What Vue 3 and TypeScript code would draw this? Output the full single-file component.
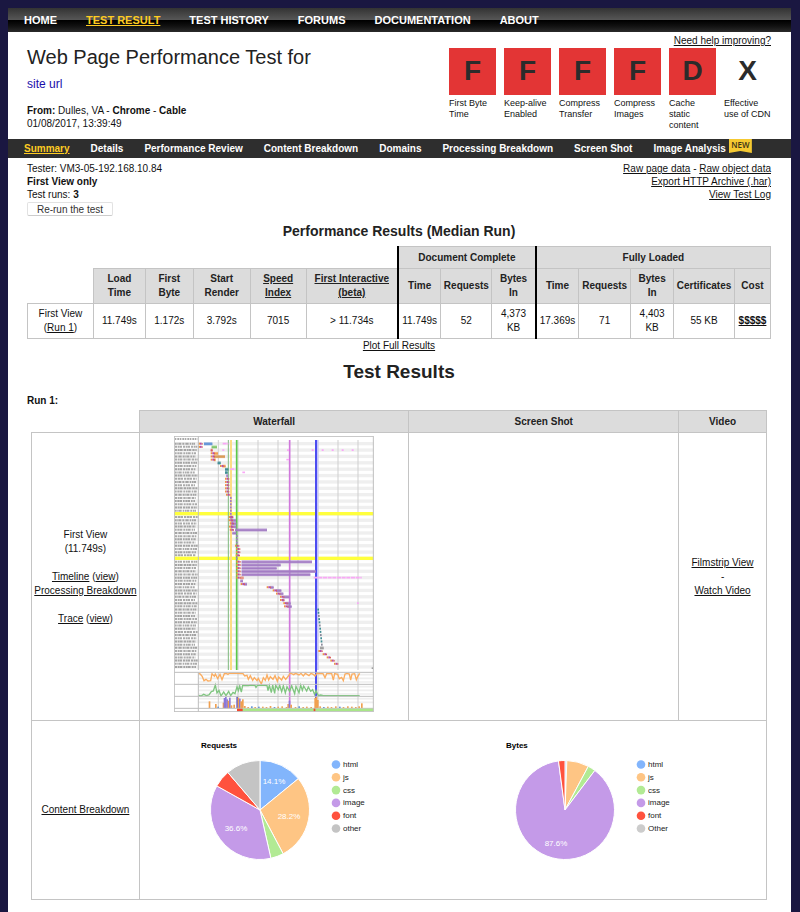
<script setup lang="ts">
interface Grade { letter: string; label: string; failing: boolean }
interface Slice { label: string; value: number; color: string }
interface Bar { row: number; x1: number; x2: number; color: string }

const mainNav: string[] = ['HOME', 'TEST RESULT', 'TEST HISTORY', 'FORUMS', 'DOCUMENTATION', 'ABOUT']
const subNav: string[] = [
  'Summary', 'Details', 'Performance Review', 'Content Breakdown', 'Domains',
  'Processing Breakdown', 'Screen Shot', 'Image Analysis',
]
const grades: Grade[] = [
  { letter: 'F', label: 'First Byte Time', failing: true },
  { letter: 'F', label: 'Keep-alive Enabled', failing: true },
  { letter: 'F', label: 'Compress Transfer', failing: true },
  { letter: 'F', label: 'Compress Images', failing: true },
  { letter: 'D', label: 'Cache static content', failing: true },
  { letter: 'X', label: 'Effective use of CDN', failing: false },
]

const share = (parts: number[]): string[] => {
  const total = parts.reduce((a, b) => a + b, 0)
  return parts.map((p) => `${(p / total) * 100}%`)
}
const summaryCols = share([66, 52, 48, 57, 56, 92, 43, 51, 44, 43, 52, 43, 61, 36])
const resultCols = share([108, 270, 270, 88])

// Waterfall: 71 request rows
const rowY = (row: number): number => 41 + 9.57 * row
const rows = Array.from({ length: 71 }, (_, i) => i)
const gridX = [160, 219, 279, 339, 399, 459, 519, 579]
const P = '#a37cc4'
const O = '#f0a050'
const R = '#d9605a'
const G = '#7fc46a'
const B = '#5b8fd6'
const T = '#3f8c94'
const bars: Bar[] = [
  { row: 0, x1: 117, x2: 142, color: B }, { row: 1, x1: 140, x2: 156, color: G },
  { row: 2, x1: 137, x2: 143, color: R }, { row: 3, x1: 146, x2: 159, color: O },
  { row: 4, x1: 146, x2: 180, color: '#d99a55' }, { row: 5, x1: 146, x2: 152, color: O },
  { row: 6, x1: 158, x2: 167, color: T }, { row: 7, x1: 172, x2: 182, color: O },
  { row: 8, x1: 180, x2: 190, color: T }, { row: 9, x1: 180, x2: 188, color: T },
  { row: 10, x1: 184, x2: 189, color: P },
  { row: 23, x1: 194, x2: 205, color: P }, { row: 24, x1: 199, x2: 213, color: P },
  { row: 25, x1: 200, x2: 214, color: P }, { row: 26, x1: 198, x2: 214, color: P },
  { row: 27, x1: 210, x2: 306, color: P }, { row: 28, x1: 202, x2: 214, color: P },
  { row: 37, x1: 230, x2: 441, color: P }, { row: 38, x1: 230, x2: 347, color: P },
  { row: 39, x1: 230, x2: 335, color: P }, { row: 40, x1: 230, x2: 453, color: P },
  { row: 41, x1: 230, x2: 436, color: P }, { row: 42, x1: 226, x2: 236, color: '#e5907e' },
  { row: 43, x1: 226, x2: 234, color: P }, { row: 44, x1: 236, x2: 246, color: P },
  { row: 45, x1: 315, x2: 326, color: P }, { row: 46, x1: 333, x2: 349, color: P },
  { row: 47, x1: 343, x2: 355, color: P }, { row: 48, x1: 355, x2: 373, color: P },
  { row: 49, x1: 352, x2: 358, color: P }, { row: 50, x1: 364, x2: 377, color: P },
  { row: 51, x1: 367, x2: 380, color: P }, { row: 64, x1: 465, x2: 476, color: '#999' },
]
// Rows that open with a connect + TLS segment
const connects: [number, number][] = [
  [0, 100], [1, 100], [3, 137], [4, 137], [5, 137], [7, 165], [11, 180], [12, 180], [13, 180],
  [14, 180], [15, 180], [16, 183], [23, 191], [24, 191], [25, 194], [26, 192], [27, 194], [32, 210],
  [33, 213], [34, 213], [35, 212], [37, 214], [38, 214], [39, 214], [40, 214], [41, 214], [42, 214],
  [44, 227], [45, 305], [46, 323], [47, 333], [48, 345], [49, 345], [50, 355], [51, 357],
  [65, 460], [66, 473], [67, 485], [68, 496], [69, 507],
]
const ticks: [number, number, string][] = [
  ...[17, 18, 19, 20, 21, 22].map((r): [number, number, string] => [r, 195, P]),
  ...[29, 30, 31, 36].map((r): [number, number, string] => [r, 213, P]),
  ...[52, 53, 54, 55, 56, 57, 58, 59, 60, 61, 62, 63].map(
    (r): [number, number, string] => [r, 457 + (r - 52), r % 3 ? T : '#8a8a9a'],
  ),
]
const scripts: [number, number, number][] = [
  [0, 173, 190], [2, 172, 192], [2, 366, 374], [2, 440, 580], [5, 364, 372], [8, 196, 212],
  [9, 232, 240], [42, 446, 590], [50, 576, 581],
]
const cpu =
  '100,730 106,732 112,740 117,752 123,748 129,753 137,752 141,731 148,739 151,732 158,746 165,733 171,749 178,731 184,730 189,733 193,730 214,730 234,731 239,738 246,736 250,748 256,737 263,751 268,743 276,752 280,745 289,762 295,743 301,751 306,735 311,750 316,740 324,748 330,737 337,754 341,741 350,750 355,739 362,748 370,738 376,729 386,734 392,730 402,735 408,730 415,738 421,730 432,737 438,730 446,734 450,738 456,730 474,731 480,743 485,731 500,731 505,750 509,731 518,733 523,746 530,742 535,752 540,732 546,730 553,732 557,750 561,732 569,731 574,749 578,740 584,730'
const bandwidth =
  '100,796 108,798 116,793 124,797 132,795 139,785 145,783 151,765 156,789 162,781 168,798 176,786 183,797 191,784 197,797 204,787 210,791 216,770 220,782 224,768 229,786 233,766 250,767 258,765 270,766 273,772 277,766 300,766 306,767 309,782 313,766 319,788 323,765 329,790 332,766 340,779 344,766 350,785 355,767 361,789 366,770 374,784 380,767 389,791 393,769 402,788 407,765 412,781 416,768 425,783 430,771 437,784 443,779 449,794 453,782 460,797 467,795 475,797 584,797'
const mainThread: [number, number, string][] = [
  [131, 20, O], [150, 12, O], [157, 4, B], [173, 16, O], [176, 30, '#8a78d8'], [180, 33, '#8a78d8'],
  [184, 26, '#8a78d8'], [188, 22, O], [192, 31, '#8a78d8'], [197, 8, O], [205, 10, O], [214, 34, '#6a62c8'],
  [218, 31, O], [222, 28, '#8a78d8'], [226, 20, O], [231, 26, O], [237, 6, O], [247, 3, O], [258, 5, B],
  [268, 3, O], [279, 4, B], [291, 4, O], [302, 3, O], [314, 6, O], [326, 3, B], [337, 4, O], [349, 5, O],
  [362, 3, O], [367, 12, O], [371, 22, '#8a78d8'], [376, 10, O], [389, 3, O], [400, 5, B], [412, 3, O],
  [423, 4, O], [436, 3, O], [448, 30, O], [452, 34, O], [456, 24, O], [463, 5, O], [474, 3, B], [486, 4, O],
  [497, 3, O], [510, 5, O], [522, 4, B], [533, 3, O], [546, 5, O], [558, 4, O], [570, 3, O], [580, 5, O], [588, 14, O],
]

// Pie charts
const pies: { title: string; slices: Slice[]; captions: [number, number, string][] }[] = [
  {
    title: 'Requests',
    slices: [
      { label: 'html', value: 10, color: '#82b5fc' },
      { label: 'js', value: 20, color: '#fec584' },
      { label: 'css', value: 3, color: '#b2ea94' },
      { label: 'image', value: 26, color: '#c49ae8' },
      { label: 'font', value: 4, color: '#ff523e' },
      { label: 'other', value: 8, color: '#c4c4c4' },
    ],
    captions: [[126, 62, '14.1%'], [141, 97, '28.2%'], [88, 109, '36.6%']],
  },
  {
    title: 'Bytes',
    slices: [
      { label: 'html', value: 0.6, color: '#82b5fc' },
      { label: 'js', value: 7.2, color: '#fec584' },
      { label: 'css', value: 2.5, color: '#b2ea94' },
      { label: 'image', value: 87.6, color: '#c49ae8' },
      { label: 'font', value: 2.1, color: '#ff523e' },
      { label: 'Other', value: 0, color: '#cccccc' },
    ],
    captions: [[103, 124, '87.6%']],
  },
]
const CX = 112
const CY = 88
const RADIUS = 49.5
const wedges = (slices: Slice[]): { d: string; color: string }[] => {
  const total = slices.reduce((a, s) => a + s.value, 0)
  let acc = 0
  return slices.filter((s) => s.value > 0).map((s) => {
    const a0 = (acc / total) * 2 * Math.PI
    acc += s.value
    const a1 = (acc / total) * 2 * Math.PI
    const pt = (a: number): string =>
      `${(CX + RADIUS * Math.sin(a)).toFixed(2)},${(CY - RADIUS * Math.cos(a)).toFixed(2)}`
    return { d: `M${CX},${CY}L${pt(a0)}A${RADIUS},${RADIUS} 0 ${a1 - a0 > Math.PI ? 1 : 0} 1 ${pt(a1)}Z`, color: s.color }
  })
}
</script>

<template>
  <div class="page">
    <nav class="main-nav" aria-label="Main">
      <a v-for="item in mainNav" :key="item" href="#" :class="{ active: item === 'TEST RESULT' }">{{ item }}</a>
    </nav>

    <header class="test-header">
      <div class="test-info">
        <h1>Web Page Performance Test for</h1>
        <a class="site" href="#">site url</a>
        <p><b>From:</b> Dulles, VA - <b>Chrome</b> - <b>Cable</b><br />01/08/2017, 13:39:49</p>
      </div>
      <div class="optimization">
        <a class="help" href="#">Need help improving?</a>
        <ul class="grades">
          <li v-for="grade in grades" :key="grade.label">
            <span class="grade" :class="{ failing: grade.failing }">{{ grade.letter }}</span>
            <span class="grade-label">{{ grade.label }}</span>
          </li>
        </ul>
      </div>
    </header>

    <nav class="sub-nav" aria-label="Test result">
      <a v-for="item in subNav" :key="item" href="#" :class="{ active: item === 'Summary' }">{{ item }}</a>
      <span class="new-badge">NEW</span>
    </nav>

    <main class="content">
      <section class="run-info">
        <div>
          Tester: VM3-05-192.168.10.84<br />
          <b>First View only</b><br />
          Test runs: <b>3</b>
          <button type="button" class="rerun">Re-run the test</button>
        </div>
        <div class="exports">
          <a href="#">Raw page data</a> - <a href="#">Raw object data</a><br />
          <a href="#">Export HTTP Archive (.har)</a><br />
          <a href="#">View Test Log</a>
        </div>
      </section>

      <h2 class="median-title">Performance Results (Median Run)</h2>
      <table class="grid">
        <colgroup><col v-for="(w, i) in summaryCols" :key="i" :style="{ width: w }" /></colgroup>
        <thead>
          <tr class="group-row">
            <td class="blank" colspan="6"></td>
            <th class="divider" colspan="3">Document Complete</th>
            <th class="divider" colspan="5">Fully Loaded</th>
          </tr>
          <tr>
            <td class="blank"></td>
            <th>Load<br />Time</th>
            <th>First<br />Byte</th>
            <th>Start<br />Render</th>
            <th><a href="#">Speed<br />Index</a></th>
            <th><a href="#">First Interactive<br />(beta)</a></th>
            <th class="divider">Time</th>
            <th>Requests</th>
            <th>Bytes<br />In</th>
            <th class="divider">Time</th>
            <th>Requests</th>
            <th>Bytes<br />In</th>
            <th>Certificates</th>
            <th>Cost</th>
          </tr>
        </thead>
        <tbody>
          <tr>
            <td>First View<br />(<a href="#">Run 1</a>)</td>
            <td>11.749s</td>
            <td>1.172s</td>
            <td>3.792s</td>
            <td>7015</td>
            <td>&gt; 11.734s</td>
            <td class="divider">11.749s</td>
            <td>52</td>
            <td>4,373<br />KB</td>
            <td class="divider">17.369s</td>
            <td>71</td>
            <td>4,403<br />KB</td>
            <td>55 KB</td>
            <td><a href="#"><b>$$$$$</b></a></td>
          </tr>
        </tbody>
      </table>
      <p class="plot"><a href="#">Plot Full Results</a></p>

      <h2 class="results-title">Test Results</h2>
      <h3 class="run-title">Run 1:</h3>
      <div class="results">
        <table class="grid">
          <colgroup><col v-for="(w, i) in resultCols" :key="i" :style="{ width: w }" /></colgroup>
          <thead>
            <tr class="group-row">
              <td class="blank"></td>
              <th>Waterfall</th>
              <th>Screen Shot</th>
              <th>Video</th>
            </tr>
          </thead>
          <tbody>
            <tr class="waterfall-row">
              <td>
                First View<br />(11.749s)<br /><br />
                <a href="#">Timeline</a> (<a href="#">view</a>)<br />
                <a href="#">Processing Breakdown</a><br /><br />
                <a href="#">Trace</a> (<a href="#">view</a>)
              </td>
              <td class="thumb-cell">
                <a href="#" class="thumb" aria-label="Waterfall">
                  <svg viewBox="27 18 600 828" width="200" height="276">
                    <rect x="27" y="18" width="600" height="828" fill="#fff" />
                    <template v-for="r in rows" :key="'s' + r">
                      <rect v-if="r % 2 === 0" x="28" :y="rowY(r) - 5" width="597" height="10" fill="#efefef" />
                    </template>
                    <path d="M100 734H625M100 745H625M100 756H625M100 770H625M100 781H625M100 792H625M100 806H625M100 817H625" stroke="#eeeeee" stroke-width="5" />
                    <g stroke="#7d7d7d" stroke-width="6" opacity=".65">
                      <line v-for="r in rows" :key="'l' + r" x1="30" :x2="90 + (r * 7) % 9" :y1="rowY(r)" :y2="rowY(r)" :stroke-dasharray="`${5 + (r % 3)} 2 ${3 + (r % 4)} 1 8 3`" />
                      <line x1="30" x2="98" y1="27" y2="27" stroke-dasharray="4 3 6 2" />
                    </g>
                    <path v-for="x in gridX" :key="'g' + x" :d="`M${x} 30V720M${x} 727V835`" stroke="#cfcfcf" stroke-width="3" />
                    <rect x="28" y="246" width="597" height="10" fill="#ffff3c" />
                    <rect x="28" y="380" width="597" height="10" fill="#ffff3c" />
                    <path d="M190 30V720" stroke="#7fb87f" stroke-width="3" />
                    <path d="M198 30V720" stroke="#fddc85" stroke-width="6" />
                    <path d="M215 30V720" stroke="#5cc94a" stroke-width="5" />
                    <path d="M374 30V835" stroke="#d078dc" stroke-width="5" />
                    <path d="M453 30V835" stroke="#4c4cf0" stroke-width="6" />
                    <path d="M458 30V720" stroke="#c4c4ff" stroke-width="4" />
                    <line v-for="(s, i) in scripts" :key="'j' + i" :x1="s[1]" :x2="s[2]" :y1="rowY(s[0])" :y2="rowY(s[0])" stroke="#f9a8f6" stroke-width="5" :stroke-dasharray="s[0] === 2 ? '6 24' : '12 2'" />
                    <g v-for="(b, i) in bars" :key="'b' + i">
                      <rect :x="b.x1" :y="rowY(b.row) - 4" :width="b.x2 - b.x1" height="9" :fill="b.color" opacity=".75" />
                      <rect :x="b.x1" :y="rowY(b.row) - 1" :width="b.x2 - b.x1" height="4" :fill="b.color" />
                    </g>
                    <g v-for="(c, i) in connects" :key="'c' + i">
                      <rect :x="c[1]" :y="rowY(c[0]) - 3" width="5" height="6" fill="#ef9445" />
                      <rect :x="c[1] + 5" :y="rowY(c[0]) - 3" width="5" height="6" fill="#b34fae" />
                      <rect :x="c[1] + 10" :y="rowY(c[0]) - 2" width="3" height="5" fill="#d9605a" />
                    </g>
                    <rect v-for="(t, i) in ticks" :key="'t' + i" :x="t[1]" :y="rowY(t[0]) - 3" width="5" height="6" :fill="t[2]" />
                    <polyline :points="cpu" fill="none" stroke="#fbad60" stroke-width="4" />
                    <polyline :points="bandwidth" fill="none" stroke="#80c680" stroke-width="4" />
                    <rect v-for="(m, i) in mainThread" :key="'m' + i" :x="m[0]" :y="834 - m[1]" width="5" :height="m[1]" :fill="m[2]" />
                    <path d="M28 727H625M28 763H625M28 799H625M28 835H625M100 18V720M100 727V845" stroke="#bdbdbd" stroke-width="3" />
                    <rect x="216" y="836" width="409" height="8" fill="#a9e688" />
                    <rect x="216" y="836" width="17" height="8" fill="#f4452f" />
                    <rect x="446" y="836" width="5" height="8" fill="#f4452f" />
                    <rect x="620" y="712" width="4" height="5" fill="#999" />
                    <rect x="28" y="19" width="597" height="826" fill="none" stroke="#bfbfbf" stroke-width="3" />
                  </svg>
                </a>
              </td>
              <td></td>
              <td><a href="#">Filmstrip View</a><br />-<br /><a href="#">Watch Video</a></td>
            </tr>
            <tr class="breakdown-row">
              <td><a href="#">Content Breakdown</a></td>
              <td colspan="3">
                <div class="charts">
                  <svg v-for="pie in pies" :key="pie.title" class="pie" viewBox="0 0 305 176" width="305" height="176" role="img" :aria-label="pie.title">
                    <text x="53" y="26" class="pie-title">{{ pie.title }}</text>
                    <path v-for="(w, i) in wedges(pie.slices)" :key="i" :d="w.d" :fill="w.color" stroke="#fff" stroke-width="1" />
                    <text v-for="c in pie.captions" :key="c[2]" :x="c[0]" :y="c[1]" class="caption">{{ c[2] }}</text>
                    <g v-for="(s, i) in pie.slices" :key="s.label">
                      <circle cx="188" :cy="42.5 + i * 12.8" r="4.3" :fill="s.color" />
                      <text x="195" :y="45 + i * 12.8" class="legend">{{ s.label }}</text>
                    </g>
                  </svg>
                </div>
              </td>
            </tr>
          </tbody>
        </table>
      </div>
    </main>
  </div>
</template>

<style>
body {
  background: #1a1741;
}
</style>

<style scoped>
.page {
  min-height: calc(100vh - 8px);
  margin: 8px 9px 0 8px;
  box-sizing: border-box;
  background: #fff;
  color: #111;
  font: 10px/13px "Liberation Sans", Arial, sans-serif;
}
a {
  color: inherit;
  text-underline-offset: 1px;
}
h1, h2, h3, p, ul {
  margin: 0;
  padding: 0;
}
.main-nav {
  display: flex;
  align-items: center;
  gap: 29px;
  height: 24px;
  padding: 0 16px;
  box-sizing: border-box;
  background: linear-gradient(#333 0%, #555 48%, #000 52%, #111 75%, #2a2a2a 100%);
  font-size: 11px;
  font-weight: bold;
  line-height: 20px;
  color: #fff;
}
.main-nav a,
.sub-nav a {
  text-decoration: none;
  white-space: nowrap;
}
.main-nav .active,
.sub-nav .active {
  color: #fc2;
  text-decoration: underline;
}
.test-header {
  display: flex;
  justify-content: space-between;
  padding: 2px 20px 8px 19px;
}
.test-info {
  padding-top: 8px;
}
h1 {
  font-size: 20px;
  font-weight: normal;
  line-height: 30px;
  color: #222;
}
.site {
  display: block;
  margin: 3px 0 11px;
  font-size: 12px;
  line-height: 18px;
  color: #1a0dab;
  text-decoration: none;
}
.optimization {
  display: flex;
  flex-direction: column;
}
.help {
  align-self: flex-end;
}
.grades {
  display: grid;
  grid-template-columns: repeat(6, 47px);
  column-gap: 8px;
  margin-top: 1px;
  list-style: none;
}
.grade {
  display: block;
  height: 47px;
  margin-bottom: 3px;
  font-size: 28px;
  font-weight: bold;
  line-height: 46px;
  text-align: center;
  color: #2b2b2b;
}
.failing {
  background: #e33535;
}
.grade-label {
  display: block;
  font-size: 9px;
  line-height: 11px;
}
.sub-nav {
  display: flex;
  align-items: center;
  gap: 21px;
  height: 19px;
  padding: 0 16px;
  background: #2e2e2e;
  color: #fff;
  font-weight: bold;
}
.new-badge {
  align-self: flex-start;
  width: 23px;
  height: 14px;
  margin-left: -18px;
  background: #f5c931;
  clip-path: polygon(0 0, 100% 0, 100% 100%, 50% 86%, 0 100%);
  color: #3b3318;
  font: 600 8px/11px "Open Sans", sans-serif;
  text-align: center;
}
.content {
  padding: 4px 20px 13px 19px;
}
.run-info {
  display: flex;
  justify-content: space-between;
}
.exports {
  text-align: right;
}
.rerun {
  display: block;
  width: 86px;
  height: 14px;
  margin-top: 1px;
  padding: 0;
  border: 1px solid #e2e2e2;
  border-bottom-color: #ccc;
  border-radius: 2px;
  background: #fff;
  font: 10px/11px "Liberation Sans", Arial, sans-serif;
  color: #333;
}
.median-title {
  margin: 5px 0;
  font-size: 14px;
  line-height: 20px;
  text-align: center;
  color: #222;
}
.grid {
  width: 100%;
  border-collapse: collapse;
  table-layout: fixed;
  line-height: 14px;
  text-align: center;
}
.grid th,
.grid td {
  height: 34px;
  padding: 0;
  border: 1px solid #c4c4c4;
}
.grid th {
  background: #dcdcdc;
  color: #222;
}
.grid .group-row > * {
  height: 21px;
}
.grid .blank {
  border: 0;
}
.grid .divider {
  border-left: 2px solid #000;
}
.plot {
  text-align: center;
}
.results-title {
  margin: 8px 0 10px;
  font-size: 19px;
  line-height: 24px;
  text-align: center;
  color: #222;
}
.run-title {
  margin-bottom: 3px;
  font-size: 10px;
  line-height: 13px;
}
.results {
  padding: 0 4px;
}
.grid .waterfall-row > td {
  height: 287px;
}
.grid .breakdown-row > td {
  height: 178px;
}
.grid .waterfall-row > .thumb-cell {
  height: 284px;
  padding-top: 3px;
  vertical-align: top;
}
.thumb,
.thumb svg {
  display: block;
  margin: 0 auto;
}
.charts {
  display: flex;
  justify-content: center;
}
.pie {
  flex: 0 1 305px;
  min-width: 0;
  font-size: 8px;
  fill: #222;
}
.pie-title {
  font-weight: bold;
  fill: #000;
}
.caption {
  fill: #fff;
  text-anchor: middle;
}
</style>
